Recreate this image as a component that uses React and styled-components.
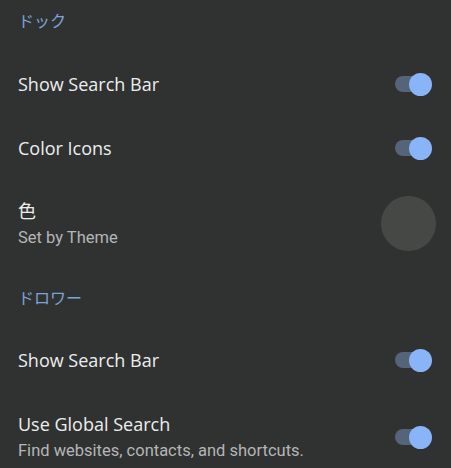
import styled, { createGlobalStyle } from "styled-components";

const GlobalStyle = createGlobalStyle`
  body {
    margin: 0;
    background: #303231;
    font-family: Roboto, "Noto Sans CJK JP", sans-serif;
  }
`;

const Page = styled.div`
  width: 451px;
  height: 468px;
  overflow: hidden;
  background: #303231;
  display: flex;
  flex-direction: column;
`;

const Header = styled.div`
  padding: ${(p) => p.$top}px 18px ${(p) => p.$bottom}px;
  font-size: 16px;
  line-height: 24px;
  color: #7fa3d8;
  font-family: "Noto Sans CJK JP", sans-serif;
`;

const Row = styled.div`
  display: flex;
  align-items: center;
  justify-content: space-between;
  min-height: 64px;
  padding: ${(p) => p.$pad || 0}px 15px ${(p) => p.$pad || 0}px 18px;
  box-sizing: border-box;
  flex-shrink: 0;
`;

const Texts = styled.div`
  display: flex;
  flex-direction: column;
`;

const Title = styled.div`
  font-size: 18px;
  line-height: 24px;
  color: #eceeee;
  font-family: "Open Sans", "Noto Sans CJK JP", sans-serif;
`;

const Subtitle = styled.div`
  margin-top: 4px;
  font-size: 16.5px;
  line-height: 22px;
  color: #b4b6b7;
`;

const Track = styled.div`
  position: relative;
  width: 30px;
  height: 16px;
  border-radius: 8px;
  background: #56647a;
  margin-right: 11px;
  flex-shrink: 0;
`;

const Thumb = styled.div`
  position: absolute;
  right: -7px;
  top: -3.5px;
  width: 23px;
  height: 23px;
  border-radius: 50%;
  background: #8ab4f8;
`;

const Swatch = styled.div`
  width: 55px;
  height: 55px;
  border-radius: 50%;
  background: #464846;
  flex-shrink: 0;
`;

const Switch = () => (
  <Track>
    <Thumb />
  </Track>
);

export default function App() {
  return (
    <Page>
      <GlobalStyle />
      <Header $top={8} $bottom={20}>ドック</Header>
      <Row>
        <Title>Show Search Bar</Title>
        <Switch />
      </Row>
      <Row>
        <Title>Color Icons</Title>
        <Switch />
      </Row>
      <Row $pad={16}>
        <Texts>
          <Title>色</Title>
          <Subtitle>Set by Theme</Subtitle>
        </Texts>
        <Swatch />
      </Row>
      <Header $top={18} $bottom={19}>ドロワー</Header>
      <Row>
        <Title>Show Search Bar</Title>
        <Switch />
      </Row>
      <Row $pad={20}>
        <Texts>
          <Title>Use Global Search</Title>
          <Subtitle>Find websites, contacts, and shortcuts.</Subtitle>
        </Texts>
        <Switch />
      </Row>
    </Page>
  );
}
